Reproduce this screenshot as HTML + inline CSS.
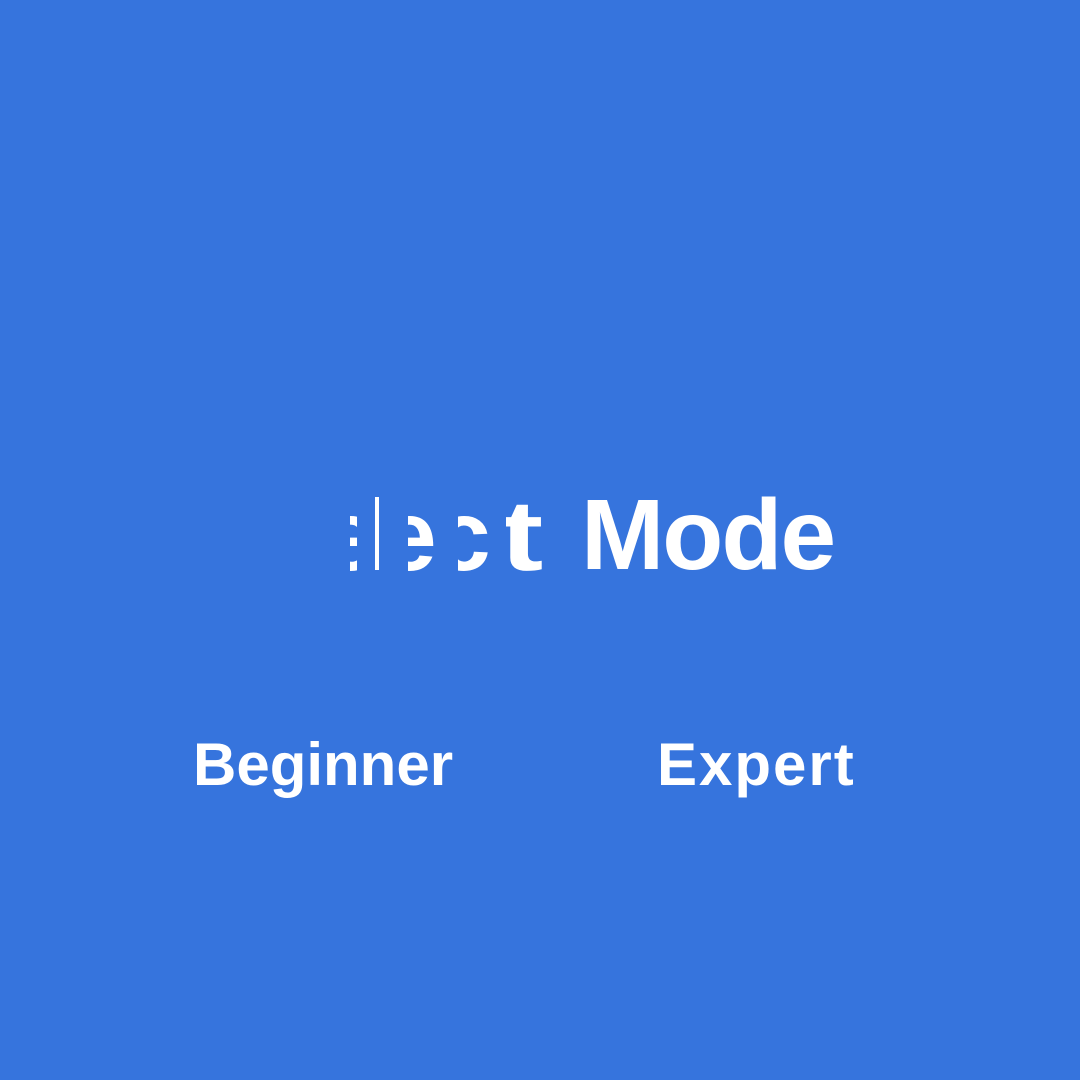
<!DOCTYPE html>
<html><head><style>
html,body{margin:0;padding:0}
body{width:1080px;height:1080px;background:#3674DD;position:relative;overflow:hidden;font-family:"Liberation Sans",Arial,sans-serif;font-weight:bold;color:#fff}
.t{position:absolute;font-size:100px;line-height:1;white-space:nowrap}
.clip{position:absolute;overflow:hidden;height:110px;top:483px}
.clip span{position:absolute;top:0;font-size:100px;line-height:1}
.b{position:absolute;font-size:60px;line-height:1;white-space:nowrap}
</style></head><body>
<div class="t" style="left:581px;top:485px;letter-spacing:-2px">Mode</div>
<div class="clip" style="left:350px;width:7px"><span style="left:-28px;top:3px">e</span></div>
<div style="position:absolute;left:375px;top:497px;width:4px;height:73px;background:#fff"></div>
<div class="clip" style="left:408px;width:30px"><span style="left:-27px;top:3px">e</span></div>
<div class="clip" style="left:458px;width:33px"><span style="left:-23px;top:3px">c</span></div>
<div class="clip" style="left:506px;width:44px"><span style="left:-6px;top:3px;transform:scaleX(1.3);transform-origin:0 0">t</span></div>
<div class="b" style="left:193px;top:735px">Beginner</div>
<div class="b" style="left:657px;top:735px;letter-spacing:2px">Expert</div>
</body></html>
